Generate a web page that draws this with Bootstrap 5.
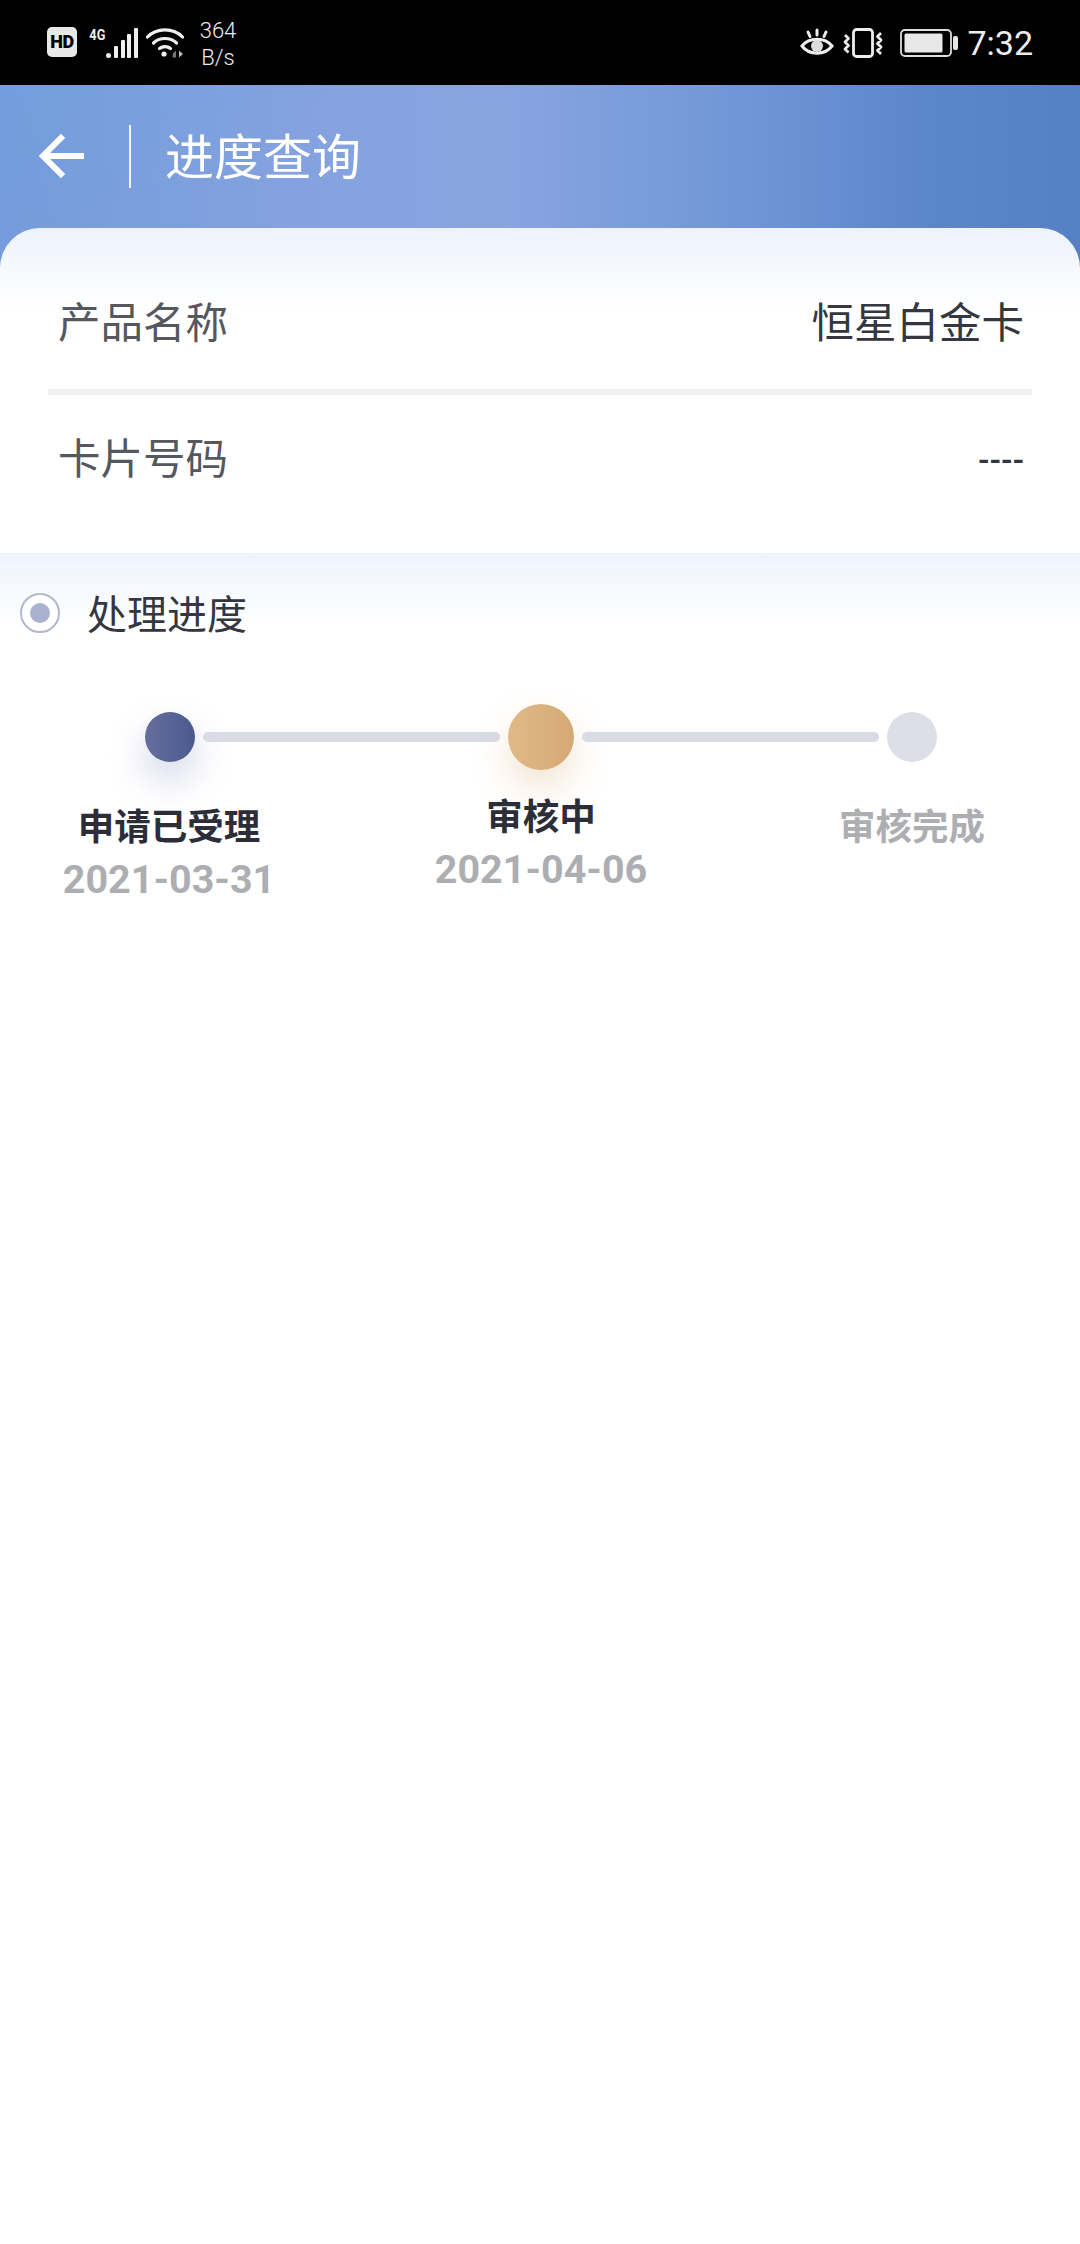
<!DOCTYPE html>
<html lang="zh-CN">
<head>
    <meta charset="UTF-8">
    <meta name="viewport" content="width=device-width, initial-scale=1.0">
    <title>进度查询</title>
    <link rel="stylesheet" href="https://cdn.jsdelivr.net/npm/bootstrap@5.3.0/dist/css/bootstrap.min.css">
    <style>
        body { background: #fff; font-family: "Noto Sans CJK SC", "Noto Sans", sans-serif; min-height: 2244px; }

        /* status bar */
        .status-bar { height: 85px; background: #000; color: #eee; padding: 0 47px 0 47px; font-family: Roboto, sans-serif; }
        .hd-icon { width: 30px; height: 30px; margin-top: -2px; background: #e8e8e8; color: #000; border-radius: 5px; font-size: 18px; font-weight: 900; line-height: 30px; text-align: center; letter-spacing: -0.5px; }
        .net-g { font-size: 15px; font-weight: 700; line-height: 14px; width: 18px; margin-left: 11px; margin-top: -16px; transform: scaleX(.85); }
        .net-speed { font-size: 22px; line-height: 27px; text-align: center; width: 42px; margin-left: 13px; padding-top: 2px; font-weight: 300; }
        .clock { font-size: 34px; font-weight: 400; margin-left: 9px; line-height: 1; }

        /* header */
        .head-bar { height: 183px; padding: 40px 0 0 38px; color: #fff;
            background:
                linear-gradient(155deg, rgba(110,165,225,.3) 0%, rgba(110,165,225,0) 28%),
                linear-gradient(90deg, #759bdb 0%, #84a2df 28%, #88a5e0 46%, #6f95d6 70%, #5b86c9 86%, #5680c4 100%); }
        .head-sep { width: 2px; height: 63px; background: #f2f5fc; margin: 0 34px 0 45px; }
        .head-title { font-size: 49px; line-height: 57px; font-weight: 400; }

        /* info card */
        .info-card { margin-top: -40px; height: 325px; position: relative; border-radius: 40px 40px 0 0;
            background: linear-gradient(180deg, #edf2fc 0, #fff 80px); padding: 0 48px; }
        .info-line { height: 162px; padding: 0 8px 0 10px; font-size: 42.5px; line-height: 1; }
        .info-line.first { height: 161px; padding-top: 24px; }
        .info-line.last { height: 120px; padding-top: 2px; }
        .info-key { color: #55585f; }
        .info-val { color: #34373f; }
        .info-dash { color: #34373f; font-size: 31px; font-weight: 700; }
        .info-rule { height: 6px; background: #f1f2f4; }

        /* progress section */
        .section-head { height: 125px; padding: 40px 0 0 20px; background: linear-gradient(180deg, #eef3fc 0, #fff 72px); }
        .section-dot { width: 40px; height: 40px; border-radius: 50%; border: 2px solid #b2b7c9; background: #fff; }
        .section-dot span { display: block; width: 20px; height: 20px; border-radius: 50%; background: #a9b2d1; }
        .section-name { font-size: 40px; line-height: 38px; color: #34373f; margin-left: 27px; }

        /* steps */
        .track { height: 66px; margin-top: 26px; padding-left: 145px; }
        .step-dot { border-radius: 50%; flex: none; }
        .step-dot.done { width: 50px; height: 50px; background: linear-gradient(90deg, #666e9f, #4a5a8c); box-shadow: 0 18px 36px rgba(92,104,170,.28); }
        .step-dot.now { width: 66px; height: 66px; background: linear-gradient(90deg, #e1b987, #d4a974); box-shadow: 0 18px 36px rgba(216,170,115,.32); }
        .step-dot.todo { width: 50px; height: 50px; background: #dcdfe8; }
        .step-line { height: 10px; border-radius: 5px; background: #d9dce4; flex: none; }
        .step-line.a { width: 297px; margin: 0 8px; }
        .step-line.b { width: 297px; margin: 0 8px; }
        .step-col { text-align: center; }
        .step-col.c1 { width: 338px; padding-top: 33px; }
        .step-col.c2 { width: 406px; padding-top: 23px; }
        .step-col.c3 { width: 336px; padding-top: 33px; }
        .step-name { font-size: 36.5px; line-height: 44px; font-weight: 700; color: #2b2e38; }
        .step-col.c3 .step-name { color: #adaeb2; }
        .step-date { font-family: Roboto, sans-serif; font-size: 39.5px; font-weight: 700; line-height: 52px; color: #adaeb2; margin-top: 7px; }
    </style>
</head>
<body>
    <div class="status-bar d-flex align-items-center">
        <div class="hd-icon">HD</div>
        <div class="net-g">4G</div>
        <svg width="32" height="30" viewBox="0 0 32 30" fill="#eee"><circle cx="2.5" cy="27.5" r="2.5"/><rect x="8" y="18" width="4" height="12" rx="1"/><rect x="15" y="12" width="4" height="18" rx="1"/><rect x="21" y="6" width="4" height="24" rx="1"/><rect x="28" y="0" width="4" height="30" rx="1"/></svg>
        <svg class="ms-2" width="38" height="30" viewBox="0 0 38 30" fill="none" stroke="#eee" stroke-width="3.2" stroke-linecap="round"><path d="M1.5 9C10.5 -.5 27.5 -.5 36.5 9"/><path d="M7.5 15C13.5 9 24.5 9 30.5 15"/><path d="M13.5 20.5C16.5 18 21.5 18 24.5 20.5"/><circle cx="18" cy="26" r="2.6" fill="#eee" stroke="none"/><path d="M33 22.5 37 26 33 29.5Z" fill="#bbb" stroke="none"/><path d="M27 25.5 30 22.5V29.5H26.5Z" fill="#777" stroke="none"/></svg>
        <div class="net-speed">364<br>B/s</div>
        <div class="ms-auto d-flex align-items-center">
            <svg width="34" height="30" viewBox="0 0 34 30" fill="none" stroke="#eee" stroke-width="3" stroke-linecap="round"><path d="M2 18C9 9 25 9 32 18 25 27.5 9 27.5 2 18Z"/><circle cx="17" cy="18" r="6" fill="#ddd" stroke="none"/><path d="M17 2V7M8 4 10 8.5M26 4 24 8.5"/></svg>
            <svg class="ms-2" width="42" height="30" viewBox="0 0 42 30" fill="none" stroke="#eee" stroke-width="2.8" stroke-linejoin="round"><rect x="11.5" y="1.5" width="19" height="27" rx="3"/><path d="M3 7 6.5 10.5 3 14 6.5 17.5 3 21 6.5 24.5M39 5 35.5 8.5 39 12 35.5 15.5 39 19 35.5 22.5 39 26"/></svg>
            <svg class="ms-3" width="58" height="28" viewBox="0 0 58 28" fill="none"><rect x="1" y="1" width="50" height="26" rx="4" stroke="#ddd" stroke-width="1.8"/><rect x="4.5" y="4.5" width="38" height="19" rx="1.5" fill="#e8e8e8"/><rect x="53" y="7" width="5" height="14" rx="2" fill="#e8e8e8"/></svg>
            <div class="clock">7:32</div>
        </div>
    </div>

    <div class="head-bar d-flex align-items-start">
        <svg width="46" height="46" viewBox="0 0 46 46" fill="none" stroke="#fff" stroke-width="6" stroke-linecap="square" class="mt-2"><path d="M43 23H6M23 5 5 23 23 41"/></svg>
        <div class="head-sep"></div>
        <div class="head-title">进度查询</div>
    </div>

    <div class="info-card">
        <div class="info-line first d-flex justify-content-between align-items-center">
            <span class="info-key">产品名称</span>
            <span class="info-val">恒星白金卡</span>
        </div>
        <div class="info-rule"></div>
        <div class="info-line last d-flex justify-content-between align-items-center">
            <span class="info-key">卡片号码</span>
            <span class="info-dash">----</span>
        </div>
    </div>

    <div class="section-head d-flex align-items-start">
        <div class="section-dot d-flex align-items-center justify-content-center"><span></span></div>
        <div class="section-name">处理进度</div>
    </div>

    <div class="track d-flex align-items-center">
        <div class="step-dot done"></div>
        <div class="step-line a"></div>
        <div class="step-dot now"></div>
        <div class="step-line b"></div>
        <div class="step-dot todo"></div>
    </div>

    <div class="d-flex align-items-start">
        <div class="step-col c1">
            <div class="step-name">申请已受理</div>
            <div class="step-date">2021-03-31</div>
        </div>
        <div class="step-col c2">
            <div class="step-name">审核中</div>
            <div class="step-date">2021-04-06</div>
        </div>
        <div class="step-col c3">
            <div class="step-name">审核完成</div>
        </div>
    </div>

    <script src="https://cdn.jsdelivr.net/npm/bootstrap@5.3.0/dist/js/bootstrap.bundle.min.js"></script>
</body>
</html>
